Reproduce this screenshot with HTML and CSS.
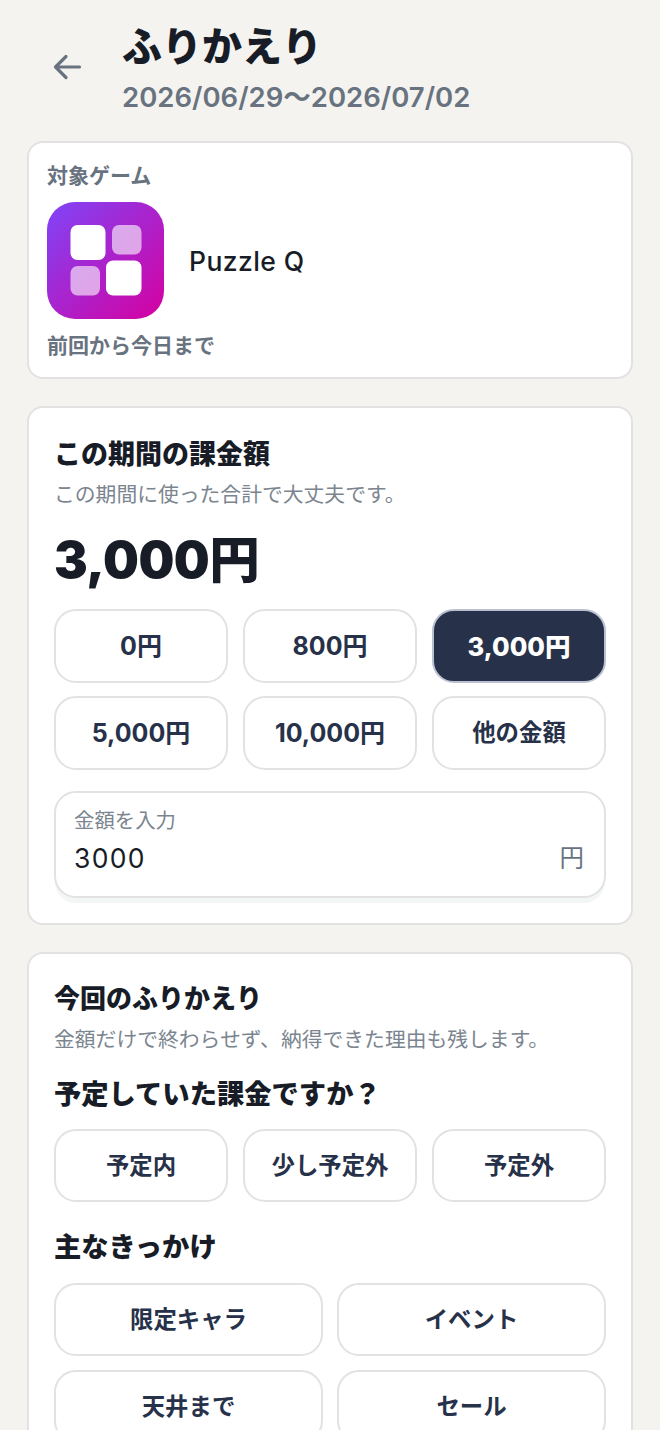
FILE: index.html
```html
<!DOCTYPE html>
<html lang="ja">
<head>
<meta charset="utf-8">
<title>ふりかえり</title>
<link rel="stylesheet" href="styles.css">
</head>
<body>
<div class="page">
  <header class="header">
    <svg class="back" viewBox="0 0 30 30" fill="none" stroke="#68737f" stroke-width="3.2" stroke-linecap="round" stroke-linejoin="round"><path d="M27.5 15H3.5M14 4.5 3.5 15 14 25.5"/></svg>
    <div class="head-text">
      <h1 class="title">ふりかえり</h1>
      <p class="period">2026/06/29〜2026/07/02</p>
    </div>
  </header>

  <section class="card game-card">
    <div class="game-label">対象ゲーム</div>
    <div class="game-row">
      <svg class="app-icon" viewBox="0 0 117 117">
        <defs><linearGradient id="g" x1="0" y1="0" x2="1" y2="1"><stop offset="0" stop-color="#7f45f8"/><stop offset="1" stop-color="#d600a0"/></linearGradient></defs>
        <rect width="117" height="117" rx="28" fill="url(#g)"/>
        <rect x="23.5" y="23" width="35" height="35" rx="7" fill="#fff"/>
        <rect x="65" y="23" width="29.5" height="29.5" rx="7" fill="#fff" fill-opacity=".6"/>
        <rect x="23.5" y="64" width="29.5" height="29.5" rx="7" fill="#fff" fill-opacity=".6"/>
        <rect x="59" y="58.5" width="35.5" height="35" rx="7" fill="#fff"/>
      </svg>
      <div class="game-name">Puzzle Q</div>
    </div>
    <div class="game-note">前回から今日まで</div>
  </section>

  <section class="card main-card">
    <h2 class="card-title">この期間の課金額</h2>
    <p class="card-sub">この期間に使った合計で大丈夫です。</p>
    <div class="amount">3,000円</div>
    <div class="grid three money">
      <button class="chip">0円</button>
      <button class="chip">800円</button>
      <button class="chip active">3,000円</button>
      <button class="chip">5,000円</button>
      <button class="chip">10,000円</button>
      <button class="chip word">他の金額</button>
    </div>
    <div class="input-box">
      <div class="input-label">金額を入力</div>
      <div class="input-row"><span class="input-value">3000</span><span class="input-unit">円</span></div>
    </div>
  </section>

  <section class="card main-card last">
    <h2 class="card-title small">今回のふりかえり</h2>
    <p class="card-sub">金額だけで終わらせず、納得できた理由も残します。</p>
    <h3 class="question">予定していた課金ですか？</h3>
    <div class="grid three">
      <button class="chip word">予定内</button>
      <button class="chip word">少し予定外</button>
      <button class="chip word">予定外</button>
    </div>
    <h3 class="question second">主なきっかけ</h3>
    <div class="grid two">
      <button class="chip word">限定キャラ</button>
      <button class="chip word">イベント</button>
      <button class="chip word">天井まで</button>
      <button class="chip word">セール</button>
    </div>
  </section>
</div>
</body>
</html>
```
FILE: styles.css
```css
* { box-sizing: border-box; }
html, body { margin: 0; padding: 0; height: 1430px; overflow: hidden; }
body {
  background: #f4f3f0;
  color: #171c26;
  font-family: Inter, "Noto Sans CJK JP", sans-serif;
}
.page { padding: 0 27px; }
.header { display: flex; align-items: center; height: 141px; padding: 0 0 5px 25px; }
.back { width: 30px; height: 30px; flex: none; margin-top: -2px; }
.head-text { margin-left: 40px; }
.title { margin: 1px 0 0; font-size: 40px; line-height: 48px; font-weight: 900; color: #171c26; }
.period { margin: 9px 0 0; font-size: 27.5px; line-height: 34px; font-weight: 600; color: #68737f; }
.card { background: #fff; border: 2px solid #e2e2e2; border-radius: 16px; }
.game-card { height: 238px; padding: 20px 18px 0; margin-bottom: 27px; }
.game-label, .game-note { font-size: 21px; line-height: 26px; font-weight: 700; color: #68737f; }
.game-row { display: flex; align-items: center; margin-top: 13px; }
.app-icon { width: 117px; height: 117px; flex: none; }
.game-name { margin-left: 25px; font-size: 26.5px; font-weight: 500; color: #171c26; letter-spacing: .4px; }
.game-note { margin-top: 14px; }
.main-card { height: 519px; padding: 30px 25px 0; margin-bottom: 27px; }
.last { height: 520px; padding-top: 28px; }
.card-title { margin: 0; font-size: 27px; line-height: 34px; font-weight: 900; }
.card-title.small { font-size: 26px; }
.card-sub { margin: 9px 0 0; font-size: 20.8px; line-height: 28px; font-weight: 400; color: #7b858f; }
.last .card-sub { margin-top: 10px; }
.amount { margin-top: 18px; font-size: 50.5px; line-height: 66px; font-weight: 900; letter-spacing: -.5px; }
.grid { display: grid; gap: 14px 15px; }
.three { grid-template-columns: repeat(3, 1fr); }
.two { grid-template-columns: repeat(2, 1fr); gap: 14px; }
.money { margin-top: 16px; row-gap: 13px; }
.chip {
  height: 73px; padding: 0 0 4px; background: #fff; border: 2px solid #e2e2e2; border-radius: 22px;
  font: inherit; font-size: 25px; font-weight: 700; color: #27324a;
}
.money .chip { height: 74px; }
.chip.word { font-size: 23.4px; }
.chip.active { background: #27324a; color: #fff; border-color: #b9c0d0; font-size: 25.5px; font-weight: 800; }
.input-box {
  margin-top: 21px; height: 107px; padding: 14px 20px 0 18px; background: #fff;
  border: 2px solid #e2e2e2; border-radius: 22px; box-shadow: 0 6px 0 -1px #f2f6f5;
}
.input-label { font-size: 20.4px; line-height: 27px; color: #7b858f; }
.input-row { display: flex; justify-content: space-between; align-items: center; margin-top: 6px; }
.input-value { font-size: 26.5px; line-height: 36px; color: #171c26; letter-spacing: 1.3px; }
.input-unit { font-size: 24.5px; line-height: 34px; color: #68737f; }
.question { margin: 24px 0 0; font-size: 27.3px; line-height: 34px; font-weight: 800; }
.question + .grid { margin-top: 17px; }
.question.second { margin-top: 29px; }
.question.second + .grid { margin-top: 18px; }
```
